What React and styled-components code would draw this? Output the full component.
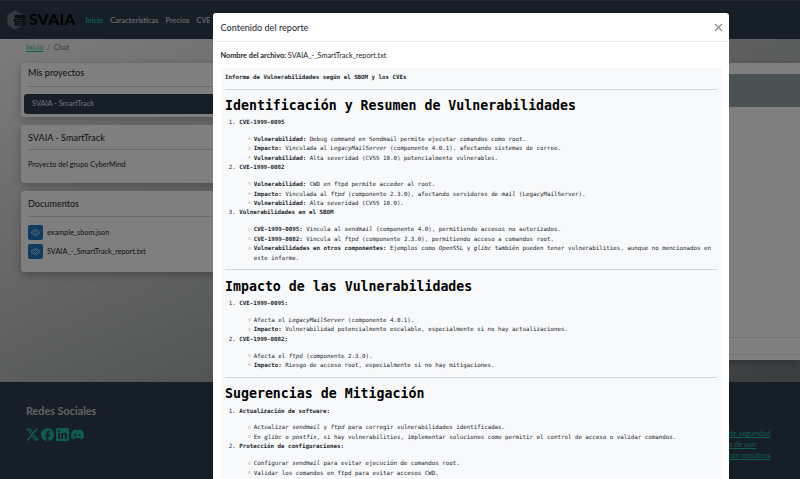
import React from "react";
import styled, { createGlobalStyle, css } from "styled-components";
import { BsDiscord, BsEye, BsFacebook, BsLinkedin, BsTwitterX } from "react-icons/bs";

const GlobalStyle = createGlobalStyle`
  *, *::before { box-sizing: border-box; }
  body {
    margin: 0;
    font-family: Lato, "Liberation Sans", sans-serif;
    font-size: 7.6px;
    line-height: 12px;
    color: #212529;
    overflow: hidden;
  }
`;

const Page = styled.div`
  display: flex;
  flex-direction: column;
  height: 479px;
  overflow: hidden;
`;

const Navbar = styled.header`
  flex: none;
  display: flex;
  align-items: center;
  height: 39px;
  padding-left: 7px;
  background: #2c3e50;
  border-top: 1px solid #43505e;
`;

const Brand = styled.div`
  display: flex;
  align-items: center;
  gap: 3px;
  width: 78.5px;
`;

const BrandName = styled.span`
  margin-top: -2px;
  font-size: 15.5px;
  font-weight: 700;
  line-height: 20px;
  letter-spacing: 0.5px;
  color: #000;
`;

const NavLinks = styled.nav`
  display: flex;
  gap: 7px;
  padding-top: 1px;
`;

const NavLink = styled.a`
  font-size: 7.35px;
  font-weight: 700;
  color: ${(p) => (p.$active ? "#18bc9c" : "#c3c9cf")};
`;

const Main = styled.main`
  flex: none;
  height: 343px;
  padding: 3px 0 0 21px;
  overflow: hidden;
  background: linear-gradient(to bottom right, #f8f8f8, #b8babb 50%, #767c80);
`;

const Breadcrumb = styled.div`
  display: flex;
  gap: 3.5px;
  height: 21px;
  padding-left: 5px;
  font-size: 7.4px;
  color: #6c757d;
`;

const Link = styled.a`
  color: #18bc9c;
  text-decoration: underline;
`;

const Columns = styled.div`
  display: grid;
  grid-template-columns: 215px 1fr;
  gap: 14px;
`;

const Sidebar = styled.div`
  display: flex;
  flex-direction: column;
  gap: 8px;
`;

const cardSurface = css`
  background: #fff;
  box-shadow: 0 3px 8px rgba(0, 0, 0, 0.25);
`;

const Card = styled.section`
  ${cardSurface}
  height: ${(p) => p.$height}px;
  padding: ${(p) => p.$top}px 3px 0;
  border-radius: 3px;
`;

const CardTitle = styled.h2`
  margin: 0 4px;
  height: ${(p) => p.$height}px;
  border-bottom: 1px solid #d5d7d9;
  font-size: 9.1px;
  font-weight: 400;
  line-height: 12px;
`;

const ProjectItem = styled.div`
  height: 20px;
  margin-top: 7px;
  padding-left: 8px;
  border-radius: 3px;
  background: #2c3e50;
  color: #dfe3e6;
  font-size: 7.35px;
  line-height: 20px;
`;

const CardText = styled.p`
  margin: 8.6px 4px 0;
  font-size: 7.25px;
`;

const Files = styled.div`
  display: grid;
  gap: 4.5px;
  margin: 8px 4px 0;
`;

const FileRow = styled.div`
  display: flex;
  align-items: center;
  gap: 4px;
  height: 15px;
  font-size: 7.3px;
`;

const FileLabel = styled.span`
  padding-top: 1.5px;
`;

const ViewButton = styled.button`
  display: grid;
  place-items: center;
  width: 15px;
  height: 15px;
  padding: 0;
  border: 0;
  border-radius: 2px;
  background: #1a78bf;
  color: #fff;
`;

const ChatPanel = styled.section`
  ${cardSurface}
  height: 297px;
  padding-top: 11px;
`;

const ChatHeader = styled.div`
  height: 33px;
  background: #95a5a6;
`;

const ChatBody = styled.div`
  height: 231px;
  border-bottom: 1px solid #dee2e6;
`;

const ChatInput = styled.div`
  height: 17px;
  border-bottom: 1px solid #dee2e6;
`;

const Footer = styled.footer`
  flex: 1;
  display: grid;
  grid-template-columns: 676.5px 1fr;
  padding: 21px 0 0 26px;
  background: #2c3e50;
`;

const FooterTitle = styled.h3`
  margin: 0 0 10px;
  font-size: 10.8px;
  font-weight: 700;
  line-height: 15px;
  color: #c3c6c9;
`;

const SocialIcons = styled.div`
  display: flex;
  gap: 2px;
  color: #18bc9c;
`;

const FooterLinks = styled.div`
  display: flex;
  flex-direction: column;
  padding-top: 26px;
  line-height: 10.9px;
  white-space: nowrap;
  font-size: 7.5px;
`;

const Backdrop = styled.div`
  position: fixed;
  inset: 0;
  display: flex;
  padding: 13px 0 0 213px;
  background: rgba(0, 0, 0, 0.5);
`;

const Dialog = styled.div`
  flex: none;
  width: 516.4px;
  height: 520px;
  border-radius: 3px;
  background: #fff;
`;

const DialogHeader = styled.div`
  display: flex;
  align-items: center;
  justify-content: space-between;
  height: 29px;
  padding: 1px 6.5px 0 7.5px;
  border-bottom: 1px solid #e9ebed;
  font-size: 9.1px;
`;

const DialogBody = styled.div`
  padding: 7.7px 7.9px 0 7.5px;
`;

const FileName = styled.p`
  margin: 0 0 6.3px;
  font-size: 7.3px;
`;

const Report = styled.article`
  height: 480px;
  padding: 4.6px 4.5px 0;
  border-radius: 2px;
  background: #f8f9fb;
  color: #212529;
  font-family: "DejaVu Sans Mono", "Liberation Mono", monospace;
  font-size: 5.8px;
  line-height: 9.44px;
`;

const ReportIntro = styled.div`
  font-weight: 700;
`;

const Rule = styled.hr`
  margin: 6.5px 0 0;
  border: 0;
  border-top: 1px solid #d6d8da;
`;

const Heading = styled.h1`
  margin: 7.5px 0 0;
  font-size: 13.25px;
  font-weight: 700;
  line-height: 17px;
  color: #000;
`;

const Outline = styled.ol`
  margin: 4.1px 0 0;
  padding-left: 14.2px;

  & > li::marker { font-weight: 400; }
`;

const Topic = styled.span`
  font-weight: 700;
`;

const Points = styled.ul`
  margin: 7.4px 0 0;
  padding-left: 14.6px;
  list-style: none;
`;

const Point = styled.li`
  &::before {
    content: "";
    display: inline-block;
    width: 3px;
    height: 3px;
    margin: 0 2.5px 1px -5.5px;
    border: 1px solid #c4c6c8;
    border-radius: 50%;
    vertical-align: middle;
  }
`;

const Strong = styled.b`
  font-weight: 700;
`;

const sections = [
  {
    title: "Identificación y Resumen de Vulnerabilidades",
    items: [
      {
        name: "CVE-1999-0095",
        points: [
          <><Strong>Vulnerabilidad:</Strong> Debug command en Sendmail permite ejecutar comandos como root.</>,
          <><Strong>Impacto:</Strong> Vinculada al <i>LegacyMailServer</i> (componente 4.0.1), afectando sistemas de correo.</>,
          <><Strong>Vulnerabilidad:</Strong> Alta severidad (CVSS 10.0) potencialmente vulnerables.</>,
        ],
      },
      {
        name: "CVE-1999-0082",
        points: [
          <><Strong>Vulnerabilidad:</Strong> CWD en ftpd permite acceder al root.</>,
          <><Strong>Impacto:</Strong> Vinculada al <i>ftpd</i> (componente 2.3.0), afectando servidores de <i>mail</i> (LegacyMailServer).</>,
          <><Strong>Vulnerabilidad:</Strong> Alta severidad (CVSS 10.0).</>,
        ],
      },
      {
        name: "Vulnerabilidades en el SBOM",
        points: [
          <><Strong>CVE-1999-0095:</Strong> Vincula al <i>sendmail</i> (componente 4.0), permitiendo accesos no autorizados.</>,
          <><Strong>CVE-1999-0082:</Strong> Vincula al <i>ftpd</i> (componente 2.3.0), permitiendo acceso a comandos root.</>,
          <><Strong>Vulnerabilidades en otros componentes:</Strong> Ejemplos como <i>OpenSSL</i> y <i>glibc</i> también pueden tener vulnerabilities, aunque no mencionados en este informe.</>,
        ],
      },
    ],
  },
  {
    title: "Impacto de las Vulnerabilidades",
    items: [
      {
        name: "CVE-1999-0095:",
        points: [
          <>Afecta el <i>LegacyMailServer</i> (componente 4.0.1).</>,
          <><Strong>Impacto:</Strong> Vulnerabilidad potencialmente escalable, especialmente si no hay actualizaciones.</>,
        ],
      },
      {
        name: "CVE-1999-0082:",
        points: [
          <>Afecta el <i>ftpd</i> (componente 2.3.0).</>,
          <><Strong>Impacto:</Strong> Riesgo de acceso root, especialmente si no hay mitigaciones.</>,
        ],
      },
    ],
  },
  {
    title: "Sugerencias de Mitigación",
    items: [
      {
        name: "Actualización de software:",
        points: [
          <>Actualizar <i>sendmail</i> y <i>ftpd</i> para corregir vulnerabilidades identificadas.</>,
          <>En <i>glibc</i> o <i>postfix</i>, si hay vulnerabilities, implementar soluciones como permitir el control de acceso o validar comandos.</>,
        ],
      },
      {
        name: "Protección de configuraciones:",
        points: [
          <>Configurar <i>sendmail</i> para evitar ejecución de comandos root.</>,
          <>Validar los comandos en ftpd para evitar accesos CWD.</>,
        ],
      },
    ],
  },
];

const Logo = () => (
  <svg width="19" height="20" viewBox="0 0 19 20">
    <path d="M8 0.3 15.5 4.6v10.6L8 19.6 0.4 15.2V4.6z" fill="#6a7581" />
    <rect x="7.5" y="4.8" width="11" height="3.3" rx="1.4" fill="#151d26" />
    <rect x="6.5" y="8.6" width="11.5" height="3.4" rx="1.2" fill="#151d26" />
    <rect x="7.5" y="12.5" width="11" height="3.3" rx="1.4" fill="#151d26" />
    <path d="M8.5 10.4h7M10 14.2h6" stroke="#6a7581" strokeWidth="0.7" />
  </svg>
);

const CloseIcon = () => (
  <svg width="9" height="9" viewBox="0 0 9 9">
    <path d="M1 1l7 7M8 1L1 8" stroke="#8b8b8b" strokeWidth="1.1" />
  </svg>
);

export default function App() {
  return (
    <>
      <GlobalStyle />
      <Page>
        <Navbar>
          <Brand>
            <Logo />
            <BrandName>SVAIA</BrandName>
          </Brand>
          <NavLinks>
            <NavLink $active>Inicio</NavLink>
            <NavLink>Características</NavLink>
            <NavLink>Precios</NavLink>
            <NavLink>CVE</NavLink>
          </NavLinks>
        </Navbar>
        <Main>
          <Breadcrumb>
            <Link>Inicio</Link>
            <span>/</span>
            <span>Chat</span>
          </Breadcrumb>
          <Columns>
            <Sidebar>
              <Card $height={53.5} $top={4}>
                <CardTitle $height={20}>Mis proyectos</CardTitle>
                <ProjectItem>SVAIA - SmartTrack</ProjectItem>
              </Card>
              <Card $height={58.5} $top={7}>
                <CardTitle $height={18.5}>SVAIA - SmartTrack</CardTitle>
                <CardText>Proyecto del grupo CyberMind</CardText>
              </Card>
              <Card $height={81} $top={7}>
                <CardTitle $height={18.5}>Documentos</CardTitle>
                <Files>
                  {["example_sbom.json", "SVAIA_-_SmartTrack_report.txt"].map((name) => (
                    <FileRow key={name}>
                      <ViewButton aria-label={name}><BsEye size={9} /></ViewButton>
                      <FileLabel>{name}</FileLabel>
                    </FileRow>
                  ))}
                </Files>
              </Card>
            </Sidebar>
            <ChatPanel>
              <ChatHeader />
              <ChatBody />
              <ChatInput />
            </ChatPanel>
          </Columns>
        </Main>
        <Footer>
          <div>
            <FooterTitle>Redes Sociales</FooterTitle>
            <SocialIcons>
              <BsTwitterX size={13} />
              <BsFacebook size={13} />
              <BsLinkedin size={13} />
              <BsDiscord size={13} />
            </SocialIcons>
          </div>
          <FooterLinks>
            <div><Link>Política de seguridad</Link></div>
            <div><Link>Términos de uso</Link></div>
            <div><Link>Trabaja con nosotros</Link></div>
          </FooterLinks>
        </Footer>
      </Page>
      <Backdrop>
        <Dialog>
          <DialogHeader>
            Contenido del reporte
            <CloseIcon />
          </DialogHeader>
          <DialogBody>
            <FileName><Strong>Nombre del archivo:</Strong> SVAIA_-_SmartTrack_report.txt</FileName>
            <Report>
              <ReportIntro>Informe de Vulnerabilidades según el SBOM y los CVEs</ReportIntro>
              {sections.map((section) => (
                <React.Fragment key={section.title}>
                  <Rule />
                  <Heading>{section.title}</Heading>
                  <Outline>
                    {section.items.map((item) => (
                      <li key={item.name}>
                        <Topic>{item.name}</Topic>
                        <Points>
                          {item.points.map((point, i) => <Point key={i}>{point}</Point>)}
                        </Points>
                      </li>
                    ))}
                  </Outline>
                </React.Fragment>
              ))}
            </Report>
          </DialogBody>
        </Dialog>
      </Backdrop>
    </>
  );
}
